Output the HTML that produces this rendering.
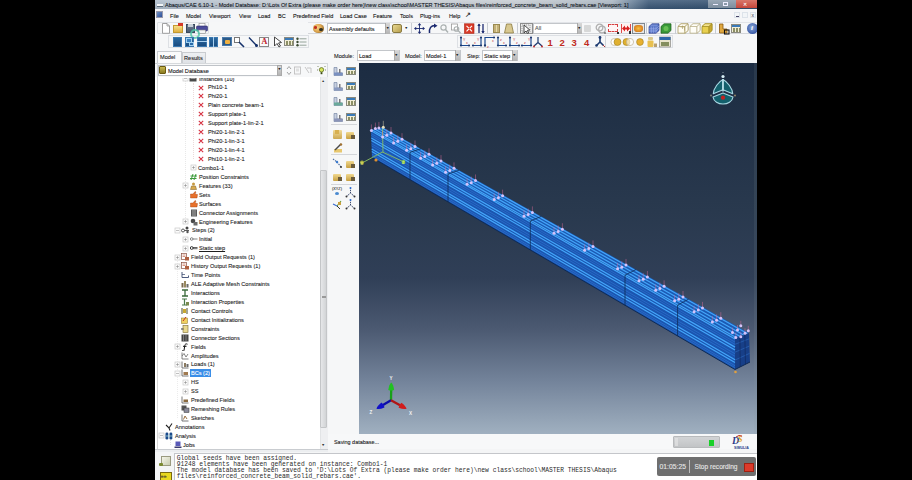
<!DOCTYPE html><html><head><meta charset="utf-8"><style>
*{margin:0;padding:0;box-sizing:border-box}
html,body{width:912px;height:480px;overflow:hidden;background:#000}
body{position:relative;font-family:"Liberation Sans",sans-serif;color:#1e1e1e}
.a{position:absolute}
.t{position:absolute;white-space:nowrap;-webkit-text-stroke:0.1px currentColor}
.m{-webkit-text-stroke:0}
#app{position:absolute;left:155px;top:0;width:602px;height:480px;background:#f4f5f6;overflow:hidden}
</style></head><body>
<div id="app">
<div class="a" style="left:0.00px;top:0.00px;width:602.00px;height:9.00px;background:linear-gradient(180deg,rgba(255,255,255,.15),rgba(0,0,0,.08)),linear-gradient(90deg,#aebccb 0%,#c4cbd3 20%,#c6ccd2 60%,#aab6c2 76%,#6f869e 79%,#3a5777 82%,#2f4d6d 100%)"></div>
<div class="t" style="left:10.20px;top:0.94px;font-size:6.1px;line-height:7.32px;color:#10161e;transform:scaleX(0.906);transform-origin:0 50%;">Abaqus/CAE 6.10-1 - Model Database: D:\Lots Of Extra (please make order here)\new class\school\MASTER THESIS\Abaqus files\reinforced_concrete_beam_solid_rebars.cae [Viewport: 1]</div>
<div class="a" style="left:1.50px;top:4.00px;width:6.00px;height:1.60px;background:#f4f6f8"></div>
<div class="a" style="left:1.50px;top:5.60px;width:6.00px;height:0.80px;background:#5a6a7a"></div>
<div class="a" style="left:553.00px;top:0.00px;width:27.50px;height:8.00px;background:linear-gradient(180deg,#9aa8b6,#7d8d9d)"></div>
<div class="a" style="left:580.50px;top:0.00px;width:21.50px;height:8.00px;background:linear-gradient(180deg,#d9776a,#c4463a)"></div>
<div class="t" style="left:588.00px;top:1.00px;font-size:5px;line-height:6.00px;color:#fff;">✕</div>
<div class="a" style="left:558.00px;top:4.00px;width:5.00px;height:1.20px;background:#eef"></div>
<div class="a" style="left:568.00px;top:2.00px;width:5.00px;height:4.00px;border:1px solid #eef"></div>
<div class="a" style="left:0.00px;top:9.00px;width:602.00px;height:13.00px;background:#f5f6f8"></div>
<div class="a" style="left:1.00px;top:11.00px;width:7.00px;height:7.00px;background:linear-gradient(135deg,#6f8fbf,#2c4f9a);border:1px solid #99a"></div>
<div class="t" style="left:15.10px;top:12.34px;font-size:6.1px;line-height:7.32px;color:#111;transform:scaleX(0.910);transform-origin:0 50%;">File</div>
<div class="t" style="left:30.90px;top:12.34px;font-size:6.1px;line-height:7.32px;color:#111;transform:scaleX(0.910);transform-origin:0 50%;">Model</div>
<div class="t" style="left:54.30px;top:12.34px;font-size:6.1px;line-height:7.32px;color:#111;transform:scaleX(0.910);transform-origin:0 50%;">Viewport</div>
<div class="t" style="left:83.90px;top:12.34px;font-size:6.1px;line-height:7.32px;color:#111;transform:scaleX(0.910);transform-origin:0 50%;">View</div>
<div class="t" style="left:103.30px;top:12.34px;font-size:6.1px;line-height:7.32px;color:#111;transform:scaleX(0.910);transform-origin:0 50%;">Load</div>
<div class="t" style="left:123.00px;top:12.34px;font-size:6.1px;line-height:7.32px;color:#111;transform:scaleX(0.910);transform-origin:0 50%;">BC</div>
<div class="t" style="left:138.00px;top:12.34px;font-size:6.1px;line-height:7.32px;color:#111;transform:scaleX(0.910);transform-origin:0 50%;">Predefined Field</div>
<div class="t" style="left:185.30px;top:12.34px;font-size:6.1px;line-height:7.32px;color:#111;transform:scaleX(0.910);transform-origin:0 50%;">Load Case</div>
<div class="t" style="left:217.90px;top:12.34px;font-size:6.1px;line-height:7.32px;color:#111;transform:scaleX(0.910);transform-origin:0 50%;">Feature</div>
<div class="t" style="left:244.50px;top:12.34px;font-size:6.1px;line-height:7.32px;color:#111;transform:scaleX(0.910);transform-origin:0 50%;">Tools</div>
<div class="t" style="left:265.30px;top:12.34px;font-size:6.1px;line-height:7.32px;color:#111;transform:scaleX(0.910);transform-origin:0 50%;">Plug-ins</div>
<div class="t" style="left:293.90px;top:12.34px;font-size:6.1px;line-height:7.32px;color:#111;transform:scaleX(0.910);transform-origin:0 50%;">Help</div>
<div class="t" style="left:310px;top:11px;font-size:7px;line-height:8px;color:#222">&#8599;</div>
<div class="a" style="left:579.00px;top:12.00px;width:6.00px;height:6.00px;border:1px solid #dde3ea;background:#f2f5f8"></div>
<div class="a" style="left:587.00px;top:12.00px;width:6.00px;height:6.00px;border:1px solid #dde3ea;background:#f2f5f8"></div>
<div class="a" style="left:595.00px;top:12.00px;width:6.00px;height:6.00px;border:1px solid #dde3ea;background:#f2f5f8"></div>
<div class="a" style="left:580.50px;top:16.00px;width:3.00px;height:1.00px;background:#446"></div>
<div class="t" style="left:596.50px;top:12.00px;font-size:5px;line-height:6.00px;color:#556;">x</div>
<div class="a" style="left:0.00px;top:22.00px;width:602.00px;height:27.00px;background:#f6f7f8"></div>
<div class="a" style="left:2.00px;top:21.50px;width:52.00px;height:12.50px;border:1px solid #dde0e4;border-radius:1px"></div>
<div class="a" style="left:13.00px;top:35.00px;width:141.00px;height:12.50px;border:1px solid #dde0e4"></div>
<div class="a" style="left:153.00px;top:22.00px;width:449.00px;height:12.00px;border-top:1px solid #e2e4e8;border-bottom:1px solid #d4d6da"></div>
<div class="a" style="left:302.00px;top:35.00px;width:216.00px;height:12.50px;border:1px solid #dde0e4"></div>
<svg class="a" style="left:6px;top:23px" width="10" height="11"><path d="M1.5 0.5 L6 0.5 L8.5 3 L8.5 10.3 L1.5 10.3 Z" fill="#fff" stroke="#8a8a8a" stroke-width="0.8"/><path d="M6 0.5 L6 3 L8.5 3" fill="none" stroke="#8a8a8a" stroke-width="0.7"/></svg>
<div class="a" style="left:18.00px;top:25.00px;width:10.00px;height:7.50px;background:linear-gradient(#f6df8a,#e0b040);border:1px solid #c49a30"></div>
<div class="a" style="left:23.00px;top:23.00px;width:5.00px;height:3.00px;background:#d43a2a"></div>
<div class="a" style="left:30.50px;top:23.50px;width:9.00px;height:9.00px;background:linear-gradient(#6a7a90,#4a5a70);border:0.8px solid #3a4a5e"></div>
<div class="a" style="left:32.50px;top:24.00px;width:5.00px;height:3.00px;background:#c8d0d8"></div>
<svg class="a" style="left:41px;top:23px" width="12" height="11"><rect x="3" y="0.5" width="6" height="3" fill="#fff" stroke="#888" stroke-width="0.6"/><rect x="0.5" y="3" width="11" height="5" rx="1" fill="#4a4a9a" stroke="#2a2a6a" stroke-width="0.6"/><rect x="2.5" y="7" width="7" height="3.5" fill="#f4f4f4" stroke="#888" stroke-width="0.6"/></svg>
<div class="a" style="left:35px;top:29px;width:10px;height:10px;border:2px solid #4fc8a8;border-radius:50%;opacity:.8"></div>
<div class="a" style="left:18.00px;top:37.00px;width:9.00px;height:9.50px;background:linear-gradient(#2a68a0,#1a4c80);border:0.8px solid #3a78b0"></div>
<div class="a" style="left:30.00px;top:37.00px;width:9.00px;height:9.50px;background:linear-gradient(#2a68a0,#1a4c80);border:0.8px solid #3a78b0"></div>
<div class="a" style="left:42.00px;top:37.00px;width:10.00px;height:9.50px;background:linear-gradient(#2a68a0,#1a4c80);border:0.8px solid #3a78b0"></div>
<div class="a" style="left:54.00px;top:37.00px;width:9.00px;height:9.50px;background:linear-gradient(#2a68a0,#1a4c80);border:0.8px solid #3a78b0"></div>
<div class="a" style="left:31.00px;top:38.00px;width:6.00px;height:4.50px;background:#3a80c0;border:0.6px solid #a0d0f0"></div>
<div class="a" style="left:34.00px;top:41.50px;width:5.00px;height:4.50px;background:#2a6aa8;border:0.6px solid #a0d0f0"></div>
<div class="a" style="left:42.00px;top:41.30px;width:10.00px;height:0.70px;background:#a8d0f0"></div>
<div class="a" style="left:58.20px;top:37.00px;width:0.70px;height:9.50px;background:#a8d0f0"></div>
<div class="a" style="left:67.00px;top:37.00px;width:10.00px;height:9.00px;background:#2a5a8a;border:1px solid #4a7aaa"></div>
<div class="a" style="left:69.50px;top:39.50px;width:5.00px;height:4.00px;background:#f0b040;border-radius:1px"></div>
<div class="a" style="left:79.00px;top:37.00px;width:6.00px;height:6.00px;border:1px solid #777;background:#fff"></div>
<svg class="a" style="left:79px;top:36px" width="26" height="12"><line x1="5" y1="6" x2="10" y2="11" stroke="#14306a" stroke-width="1.6"/><line x1="15" y1="1.5" x2="23" y2="10" stroke="#14306a" stroke-width="1.3"/><circle cx="22.5" cy="9.5" r="1.5" fill="#14306a"/></svg>
<div class="a" style="left:104.00px;top:36.50px;width:10.00px;height:10.00px;border:1px solid #888;background:#fafafa"></div>
<div class="t" style="left:106.50px;top:36.80px;font-size:8px;line-height:9.60px;color:#c0202a;font-family:'Liberation Serif',serif;font-weight:bold">A</div>
<svg class="a" style="left:118px;top:36px" width="10" height="12"><path d="M1.5 1 L1.5 10 L4 7.5 L6 11 L7.5 10 L5.5 7 L8.5 6.5 Z" fill="#fff" stroke="#333" stroke-width="0.9"/></svg>
<div class="a" style="left:129.00px;top:37.00px;width:10.00px;height:9.00px;background:linear-gradient(#3a7ab8 0,#3a7ab8 30%,#f2eed8 30%);border:0.8px solid #8a8a80"></div>
<div class="a" style="left:130.50px;top:41.00px;width:7.00px;height:4.00px;background:repeating-linear-gradient(90deg,#6a7040 0 2px,#f2eed8 2px 3px);opacity:.75"></div>
<svg class="a" style="left:141px;top:37px" width="11" height="10"><g fill="#3a4a30"><circle cx="1.5" cy="1.8" r="1.2"/><circle cx="1.5" cy="5" r="1.2"/><circle cx="1.5" cy="8.2" r="1.2"/></g><g stroke="#8a9a90" stroke-width="0.9"><line x1="3.5" y1="1.8" x2="10.5" y2="1.8"/><line x1="3.5" y1="5" x2="10.5" y2="5"/><line x1="3.5" y1="8.2" x2="10.5" y2="8.2"/></g></svg>
<div class="a" style="left:158.00px;top:24.00px;width:11.00px;height:9.00px;background:radial-gradient(circle at 40% 40%,#f4d28a 0,#e0a850 45%,#6a4a20 100%);border-radius:45%"></div>
<div class="a" style="left:158.50px;top:26.00px;width:3.50px;height:2.50px;background:#c03020;border-radius:50%"></div>
<div class="a" style="left:164.00px;top:28.00px;width:3.50px;height:3.00px;background:#303020;border-radius:50%"></div>
<div class="a" style="left:172.00px;top:23.00px;width:63.00px;height:11.00px;background:#fff;border:1px solid #bfc3c8"></div>
<div class="a" style="left:230.00px;top:23.00px;width:5.00px;height:11.00px;background:linear-gradient(#d8d8d8,#b4b4b4);border-left:1px solid #aaa"></div>
<div class="t" style="left:231.00px;top:26.40px;font-size:3.5px;line-height:4.20px;color:#222;">&#9660;</div>
<div class="t" style="left:174.00px;top:24.84px;font-size:6.1px;line-height:7.32px;color:#151515;transform:scaleX(0.920);transform-origin:0 50%;">Assembly defaults</div>
<div class="a" style="left:237.00px;top:23.50px;width:10.00px;height:9.50px;background:linear-gradient(135deg,#e8d890,#b8a050);border:1px solid #8a7a40;border-radius:2px"></div>
<div class="t" style="left:249.50px;top:26.40px;font-size:3.5px;line-height:4.20px;color:#222;">&#9660;</div>
<div class="a" style="left:256.00px;top:23.00px;width:0.80px;height:11.00px;background:#c8ccd2"></div>
<svg class="a" style="left:259px;top:23px" width="80" height="11"><g stroke="#1c2a70" stroke-width="0.9"><line x1="5.5" y1="1.5" x2="5.5" y2="9.5"/><line x1="1.5" y1="5.5" x2="9.5" y2="5.5"/></g><path d="M5.5 0 L7.3 2.2 L3.7 2.2Z M5.5 11 L7.3 8.8 L3.7 8.8Z M0 5.5 L2.2 3.7 L2.2 7.3Z M11 5.5 L8.8 3.7 L8.8 7.3Z" fill="#1c2a70"/><path d="M15.5 10 C15 5 17 2.5 21 2.5" stroke="#1c2a70" stroke-width="1.5" fill="none"/><path d="M20 0.5 L23.5 2.8 L20 5 Z" fill="#1c2a70"/><circle cx="29.5" cy="4.5" r="2.6" fill="none" stroke="#aab0b0" stroke-width="1.2"/><line x1="31.5" y1="6.5" x2="34" y2="9.5" stroke="#aab0b0" stroke-width="1.4"/><rect x="37.5" y="1" width="6" height="6" fill="#fff" stroke="#999" stroke-width="0.8"/><circle cx="42.5" cy="6" r="2.3" fill="none" stroke="#aab0b0" stroke-width="1.1"/><line x1="44" y1="7.5" x2="46.5" y2="10" stroke="#aab0b0" stroke-width="1.3"/><rect x="50.5" y="0.8" width="9.5" height="9.5" fill="#d83a28" stroke="#b02010" stroke-width="0.6"/><path d="M52.5 2.8 L54.8 5.1 M58 2.8 L55.7 5.1 M52.5 8.3 L54.8 6 M58 8.3 L55.7 6" stroke="#fff" stroke-width="1.1"/><g stroke="#1c2a70" stroke-width="1.3"><line x1="65" y1="1" x2="65" y2="10"/><line x1="69" y1="1" x2="69" y2="10"/></g><path d="M63.3 3 L65 0.5 L66.7 3Z M67.3 8 L69 10.5 L70.7 8Z" fill="#1c2a70"/></svg>
<div class="a" style="left:332.00px;top:23.00px;width:0.80px;height:11.00px;background:#c8ccd2"></div>
<div class="a" style="left:338.00px;top:24.00px;width:7.00px;height:9.00px;background:repeating-linear-gradient(90deg,#c4b078 0 2px,#e6dca8 2px 3px);border:1px solid #9a8a50"></div>
<svg class="a" style="left:349px;top:23px" width="10" height="11"><path d="M2.5 1 L7.5 1 L9.5 10 L0.5 10 Z" fill="#d8c890" stroke="#8a7a40" stroke-width="0.8"/></svg>
<div class="a" style="left:362.00px;top:23.00px;width:0.80px;height:11.00px;background:#c8ccd2"></div>
<div class="a" style="left:365.00px;top:23.00px;width:12.50px;height:10.50px;background:#e9e9e9;border:1px solid #8d8d8d"></div>
<svg class="a" style="left:366px;top:24px" width="11" height="10"><path d="M3 1 L3 9 L5 7 L6.5 9.5 L7.7 8.8 L6.3 6.4 L8.8 6 Z" fill="#fff" stroke="#333" stroke-width="0.9"/><rect x="1" y="1" width="8" height="7" fill="none" stroke="#555" stroke-width="0.5" stroke-dasharray="1 1"/></svg>
<div class="a" style="left:378.00px;top:23.00px;width:48.50px;height:10.50px;background:#fff;border:1px solid #c3c6ca"></div>
<div class="a" style="left:422.00px;top:23.00px;width:4.50px;height:10.50px;background:linear-gradient(#d8d8d8,#b4b4b4);border-left:1px solid #aaa"></div>
<div class="t" style="left:422.50px;top:26.10px;font-size:3.5px;line-height:4.20px;color:#222;">&#9660;</div>
<div class="t" style="left:380.00px;top:25.20px;font-size:5.5px;line-height:6.60px;color:#555;">All</div>
<div class="a" style="left:429.00px;top:25.00px;width:7.00px;height:7.00px;background:#cfcfcf;border-radius:1px;opacity:.8"></div>
<svg class="a" style="left:440px;top:23px" width="12" height="11"><circle cx="4.5" cy="4.5" r="3.3" fill="none" stroke="#b0b0b0" stroke-width="1.3"/><circle cx="7" cy="6.5" r="3.3" fill="none" stroke="#b0b0b0" stroke-width="1.3"/><line x1="9" y1="10" x2="11" y2="10" stroke="#444" stroke-width="1"/></svg>
<div class="a" style="left:453.00px;top:23.50px;width:10.00px;height:8.50px;border:1px dashed #d84040;background:#fff6f6"></div>
<div class="a" style="left:462.00px;top:31.50px;width:2.00px;height:2.00px;background:#333"></div>
<div class="a" style="left:466.00px;top:24.00px;width:9.00px;height:8.00px;background:#fff0ee"></div>
<svg class="a" style="left:465px;top:23px" width="12" height="11"><path d="M1.5 1 L1.5 10 M10.5 1 L10.5 10" stroke="#d82020" stroke-width="0.8"/><path d="M2 5.5 L5 2.5 L5 8.5 Z M10 5.5 L7 2.5 L7 8.5 Z" fill="#d82020"/><rect x="4.5" y="4.5" width="3" height="2" fill="#d82020"/></svg>
<div class="a" style="left:474.00px;top:31.00px;width:1.50px;height:2.50px;background:#333"></div>
<div class="a" style="left:477.00px;top:23.00px;width:12.50px;height:10.50px;background:#e6e6e6;border:1px solid #808890"></div>
<div class="a" style="left:479.00px;top:25.00px;width:9.00px;height:7.00px;background:radial-gradient(ellipse at 50% 50%,#f8c040,#d88020 70%,#a06020);border-radius:40%"></div>
<div class="a" style="left:490.50px;top:23.00px;width:0.70px;height:11.00px;background:#c8ccd2"></div>
<svg class="a" style="left:493px;top:23px" width="12" height="11"><path d="M1 3.5 L4 0.8 L11 0.8 L11 7.5 L8 10.2 L1 10.2 Z" fill="#5a78c8" stroke="#2a3a8a" stroke-width="0.7"/><path d="M1 5.8 L8 5.8 L11 3 M1 8 L8 8 L11 5.2 M3.3 3.5 L3.3 10.2 M5.6 3.5 L5.6 10.2 M8 3.5 L8 10.2 M2.5 2.2 L9.5 2.2" stroke="#a8b8f0" stroke-width="0.5" fill="none"/></svg>
<svg class="a" style="left:505px;top:23px" width="12" height="11"><path d="M1 3.5 L4 0.8 L11 0.8 L11 7.5 L8 10.2 L1 10.2 Z" fill="#3a9a3a" stroke="#1a5a1a" stroke-width="0.7"/><circle cx="6" cy="5.5" r="2.5" fill="#7ad060" opacity=".7"/></svg>
<div class="a" style="left:519.50px;top:23.00px;width:0.70px;height:11.00px;background:#c8ccd2"></div>
<svg class="a" style="left:522px;top:23px" width="12" height="11"><path d="M1 3.5 L4 0.8 L11 0.8 L11 7.5 L8 10.2 L1 10.2 Z" fill="#fffdf4" stroke="#a89a60" stroke-width="0.8"/><path d="M1 3.5 L8 3.5 L11 0.8 M8 3.5 L8 10.2" fill="none" stroke="#a89a60" stroke-width="0.8"/><path d="M1 3.5 L4 0.8 L11 0.8 L8 3.5 Z" fill="#fffdf4" stroke="#a89a60" stroke-width="0.6400000000000001"/><path d="M8 3.5 L11 0.8 L11 7.5 L8 10.2 Z" fill="#fffdf4" stroke="#a89a60" stroke-width="0.6400000000000001"/></svg>
<svg class="a" style="left:525px;top:25px" width="6" height="6"><path d="M0.5 2 L4.5 2 L4.5 5.5 M2.5 0.5 L2.5 4" stroke="#a89a60" stroke-width="0.6" fill="none"/></svg>
<svg class="a" style="left:534px;top:23px" width="12" height="11"><path d="M1 3.5 L4 0.8 L11 0.8 L11 7.5 L8 10.2 L1 10.2 Z" fill="#fffef8" stroke="#b8ae88" stroke-width="0.8"/><path d="M1 3.5 L8 3.5 L11 0.8 M8 3.5 L8 10.2" fill="none" stroke="#b8ae88" stroke-width="0.8"/><path d="M1 3.5 L4 0.8 L11 0.8 L8 3.5 Z" fill="#fffef8" stroke="#b8ae88" stroke-width="0.6400000000000001"/><path d="M8 3.5 L11 0.8 L11 7.5 L8 10.2 Z" fill="#fffef8" stroke="#b8ae88" stroke-width="0.6400000000000001"/></svg>
<svg class="a" style="left:546px;top:23px" width="12" height="11"><path d="M1 3.5 L4 0.8 L11 0.8 L11 7.5 L8 10.2 L1 10.2 Z" fill="#e8d050" stroke="#a08a20" stroke-width="0.8"/><path d="M1 3.5 L8 3.5 L11 0.8 M8 3.5 L8 10.2" fill="none" stroke="#a08a20" stroke-width="0.8"/><path d="M1 3.5 L4 0.8 L11 0.8 L8 3.5 Z" fill="#f4e490" stroke="#a08a20" stroke-width="0.6400000000000001"/><path d="M8 3.5 L11 0.8 L11 7.5 L8 10.2 Z" fill="#c8a830" stroke="#a08a20" stroke-width="0.6400000000000001"/></svg>
<div class="a" style="left:560.00px;top:23.00px;width:0.80px;height:11.00px;background:#c8ccd2"></div>
<svg class="a" style="left:563px;top:23px" width="12" height="12"><path d="M1.5 1 L5 1 L5 6 L9 6 L9 10 L1.5 10 Z" fill="#e0a840" stroke="#8a5a10" stroke-width="0.8"/><rect x="6.5" y="7" width="4.5" height="4" fill="none" stroke="#111" stroke-width="1.1"/></svg>
<div class="a" style="left:576.00px;top:24.00px;width:10.00px;height:9.00px;background:linear-gradient(#3a7ab8 0,#3a7ab8 30%,#f2eed8 30%);border:0.8px solid #8a8a80"></div>
<div class="a" style="left:577.50px;top:28.00px;width:7.00px;height:4.00px;background:repeating-linear-gradient(90deg,#6a7040 0 2px,#f2eed8 2px 3px);opacity:.75"></div>
<div class="a" style="left:592.00px;top:23.00px;width:11.00px;height:11.00px;background:radial-gradient(circle at 45% 40%,#8aa8d8,#3a5aa8 70%);border-radius:50%"></div>
<div class="t" style="left:596.00px;top:24.30px;font-size:7px;line-height:8.40px;color:#fff;font-family:'Liberation Serif',serif;font-style:italic;font-weight:bold">i</div>
<svg class="a" style="left:304px;top:36px" width="215" height="12"><path d="M2 1.5 L2 9.5 L10 9.5" fill="none" stroke="#1c4a90" stroke-width="1.2"/><path d="M22 1.5 L22 9.5 L14 9.5" fill="none" stroke="#1c4a90" stroke-width="1.2"/><path d="M26 9.5 L26 1.5 L35 1.5" fill="none" stroke="#1c4a90" stroke-width="1.2"/><path d="M39 1.5 L39 9.5 L47 9.5" fill="none" stroke="#1c4a90" stroke-width="1.2"/><path d="M51 1.5 L51 9.5 L60 9.5" fill="none" stroke="#1c4a90" stroke-width="1.2"/><path d="M72 1.5 L72 9.5 L63 9.5" fill="none" stroke="#1c4a90" stroke-width="1.2"/><circle cx="2" cy="9.5" r="1.1" fill="#1c3a70"/><circle cx="10" cy="9.5" r="1.1" fill="#1c3a70"/><circle cx="22" cy="9.5" r="1.1" fill="#1c3a70"/><circle cx="14" cy="9.5" r="1.1" fill="#1c3a70"/><circle cx="26" cy="9.5" r="1.1" fill="#1c3a70"/><circle cx="35" cy="1.5" r="1.1" fill="#1c3a70"/><circle cx="39" cy="9.5" r="1.1" fill="#1c3a70"/><circle cx="47" cy="9.5" r="1.1" fill="#1c3a70"/><circle cx="51" cy="9.5" r="1.1" fill="#1c3a70"/><circle cx="60" cy="9.5" r="1.1" fill="#1c3a70"/><circle cx="72" cy="9.5" r="1.1" fill="#1c3a70"/><circle cx="63" cy="9.5" r="1.1" fill="#1c3a70"/><circle cx="2" cy="1.5" r="1.1" fill="#1c3a70"/><circle cx="22" cy="1.5" r="1.1" fill="#1c3a70"/><circle cx="26" cy="9.5" r="1.1" fill="#1c3a70"/><circle cx="39" cy="1.5" r="1.1" fill="#1c3a70"/><circle cx="51" cy="1.5" r="1.1" fill="#1c3a70"/><circle cx="72" cy="1.5" r="1.1" fill="#1c3a70"/><text x="4" y="4.5" font-size="3.5" fill="#c03030" font-family="Liberation Sans">Y</text><text x="7" y="8" font-size="3.5" fill="#c03030" font-family="Liberation Sans">x</text><text x="15" y="8" font-size="3.5" fill="#c03030" font-family="Liberation Sans">x</text><text x="18" y="4.5" font-size="3.5" fill="#c03030" font-family="Liberation Sans">Y</text><text x="28" y="11.5" font-size="3.5" fill="#c03030" font-family="Liberation Sans">z</text><text x="33" y="6" font-size="3.5" fill="#c03030" font-family="Liberation Sans">x</text><text x="41" y="4.5" font-size="3.5" fill="#c03030" font-family="Liberation Sans">z</text><text x="44" y="8" font-size="3.5" fill="#c03030" font-family="Liberation Sans">x</text><text x="54" y="4.5" font-size="3.5" fill="#c03030" font-family="Liberation Sans">Y</text><text x="57" y="8" font-size="3.5" fill="#c03030" font-family="Liberation Sans">z</text><text x="65" y="8" font-size="3.5" fill="#c03030" font-family="Liberation Sans">z</text><text x="69" y="4.5" font-size="3.5" fill="#c03030" font-family="Liberation Sans">Y</text><g stroke="#1c3a70" stroke-width="1.2"><line x1="79" y1="6.5" x2="79" y2="1"/><line x1="79" y1="6.5" x2="75" y2="10"/><line x1="79" y1="6.5" x2="83" y2="10"/></g><circle cx="75" cy="10.5" r="1" fill="#c03030"/><circle cx="83" cy="10.5" r="1" fill="#c03030"/><text x="88.5" y="10.2" font-size="9.5" fill="#c02a20" font-weight="bold" font-family="Liberation Sans">1</text><text x="100.5" y="10.2" font-size="9.5" fill="#c02a20" font-weight="bold" font-family="Liberation Sans">2</text><text x="112.5" y="10.2" font-size="9.5" fill="#c02a20" font-weight="bold" font-family="Liberation Sans">3</text><text x="125" y="10.2" font-size="9.5" fill="#c02a20" font-weight="bold" font-family="Liberation Sans">4</text><g stroke="#1c3a70" stroke-width="1.6"><line x1="141" y1="6" x2="141" y2="1"/><line x1="141" y1="6" x2="137.5" y2="9.5"/><line x1="141" y1="6" x2="144.5" y2="9.5"/></g><circle cx="141" cy="1.5" r="1.4" fill="#1c3a70"/><circle cx="137.5" cy="9.5" r="1.3" fill="#1c3a70"/><line x1="144" y1="9" x2="146" y2="11" stroke="#aa3030" stroke-width="1"/><line x1="146.5" y1="0" x2="146.5" y2="12" stroke="#c8ccd2" stroke-width="0.8"/><circle cx="155.5" cy="6" r="3.6" fill="#fff" stroke="#c0b090" stroke-width="0.7"/><circle cx="158.5" cy="6" r="3.5" fill="#e0b030" stroke="#a08020" stroke-width="0.6"/><circle cx="167.5" cy="6" r="3.5" fill="#e0b030" stroke="#a08020" stroke-width="0.6"/><circle cx="171" cy="6" r="3.6" fill="#fff" fill-opacity="0.6" stroke="#c0b090" stroke-width="0.7"/><circle cx="181" cy="6" r="3.4" fill="#e8b030" stroke="#a08020" stroke-width="0.6"/><rect x="189" y="1" width="5" height="3" fill="#d8c890" rx="1"/><rect x="188.5" y="4.5" width="6" height="6.5" fill="#e8c050" rx="1"/><rect x="195" y="7.5" width="3" height="3.5" fill="#b8a070"/><rect x="200.5" y="1" width="11" height="10" fill="#e8e4cc" stroke="#777" stroke-width="0.6"/><rect x="200.5" y="1" width="11" height="3" fill="#2c66a8"/><rect x="202" y="6" width="8" height="4" fill="#5a6a30" opacity="0.7"/></svg>
<div class="a" style="left:173.00px;top:48.00px;width:429.00px;height:15.00px;background:#f6f7f8"></div>
<div class="t" style="left:178.80px;top:51.64px;font-size:6.1px;line-height:7.32px;color:#1a1a1a;transform:scaleX(0.920);transform-origin:0 50%;">Module:</div>
<div class="a" style="left:202.00px;top:49.50px;width:43.00px;height:11.50px;background:#fff;border:1px solid #c3c6ca"></div>
<div class="a" style="left:239.00px;top:49.50px;width:6.00px;height:11.50px;background:linear-gradient(#d8d8d8,#b4b4b4);border-left:1px solid #aaa;border-right:1px solid #c3c6ca"></div>
<div class="t" style="left:239.50px;top:52.90px;font-size:3.5px;line-height:4.20px;color:#222;">&#9660;</div>
<div class="t" style="left:204.00px;top:51.64px;font-size:6.1px;line-height:7.32px;color:#151515;transform:scaleX(0.920);transform-origin:0 50%;">Load</div>
<div class="a" style="left:269.00px;top:49.50px;width:37.00px;height:11.50px;background:#fff;border:1px solid #c3c6ca"></div>
<div class="a" style="left:300.00px;top:49.50px;width:6.00px;height:11.50px;background:linear-gradient(#d8d8d8,#b4b4b4);border-left:1px solid #aaa;border-right:1px solid #c3c6ca"></div>
<div class="t" style="left:300.50px;top:52.90px;font-size:3.5px;line-height:4.20px;color:#222;">&#9660;</div>
<div class="t" style="left:271.00px;top:51.64px;font-size:6.1px;line-height:7.32px;color:#151515;transform:scaleX(0.920);transform-origin:0 50%;">Model-1</div>
<div class="a" style="left:327.00px;top:49.50px;width:36.00px;height:11.50px;background:#fff;border:1px solid #c3c6ca"></div>
<div class="a" style="left:357.00px;top:49.50px;width:6.00px;height:11.50px;background:linear-gradient(#d8d8d8,#b4b4b4);border-left:1px solid #aaa;border-right:1px solid #c3c6ca"></div>
<div class="t" style="left:357.50px;top:52.90px;font-size:3.5px;line-height:4.20px;color:#222;">&#9660;</div>
<div class="t" style="left:329.00px;top:51.64px;font-size:6.1px;line-height:7.32px;color:#151515;transform:scaleX(0.920);transform-origin:0 50%;">Static step</div>
<div class="t" style="left:250.00px;top:51.64px;font-size:6.1px;line-height:7.32px;color:#1a1a1a;transform:scaleX(0.920);transform-origin:0 50%;">Model:</div>
<div class="t" style="left:312.00px;top:51.64px;font-size:6.1px;line-height:7.32px;color:#1a1a1a;transform:scaleX(0.920);transform-origin:0 50%;">Step:</div>
<div class="a" style="left:0.00px;top:49.00px;width:175.00px;height:14.00px;background:#f6f7f8"></div>
<div class="a" style="left:2.00px;top:50.50px;width:24.50px;height:13.00px;background:#fbfbfb;border:1px solid #c9ccd0;border-bottom:none"></div>
<div class="a" style="left:26.50px;top:52.00px;width:24.50px;height:10.50px;background:linear-gradient(#eef0f2,#dfe2e6);border:1px solid #c9ccd0;border-bottom:none"></div>
<div class="t" style="left:4.50px;top:53.34px;font-size:6.1px;line-height:7.32px;color:#222;transform:scaleX(0.920);transform-origin:0 50%;">Model</div>
<div class="t" style="left:28.80px;top:53.94px;font-size:6.1px;line-height:7.32px;color:#222;transform:scaleX(0.920);transform-origin:0 50%;">Results</div>
<div class="a" style="left:0.00px;top:62.50px;width:173.00px;height:1.00px;background:#c9ccd0"></div>
<div class="a" style="left:26.50px;top:62.50px;width:0.00px;height:1.00px;"></div>
<div class="a" style="left:2.00px;top:62.50px;width:24.50px;height:1.00px;background:#fbfbfb"></div>
<div class="a" style="left:0.00px;top:63.50px;width:173.00px;height:14.00px;background:#f7f8f9"></div>
<div class="a" style="left:1.50px;top:63.00px;width:171.50px;height:14.50px;border:1px solid #d6d9dc;border-bottom:none"></div>
<div class="a" style="left:2.50px;top:64.50px;width:124.50px;height:11.50px;background:#fff;border:1px solid #bfc3c8"></div>
<div class="a" style="left:122.00px;top:64.50px;width:5.00px;height:11.50px;background:linear-gradient(#d8d8d8,#b4b4b4);border:1px solid #aaa"></div>
<div class="t" style="left:122.70px;top:68.02px;font-size:3.3px;line-height:3.96px;color:#222;">&#9660;</div>
<div class="a" style="left:4.00px;top:66.00px;width:7.00px;height:8.00px;background:linear-gradient(#c8b850,#8a7a20);border:1px solid #6a5a10;border-radius:1px"></div>
<div class="t" style="left:13.40px;top:66.64px;font-size:6.1px;line-height:7.32px;color:#151515;transform:scaleX(0.920);transform-origin:0 50%;">Model Database</div>
<svg class="a" style="left:129px;top:64px" width="44" height="13"><path d="M3 5 L5 2.5 L7 5" fill="none" stroke="#999" stroke-width="0.9"/><path d="M3 8 L5 10.5 L7 8" fill="none" stroke="#999" stroke-width="0.9"/><rect x="10.5" y="3" width="6" height="7" fill="none" stroke="#c0c0c0" stroke-width="0.9"/><rect x="12" y="4.5" width="3" height="3" fill="#e0e0e0"/><path d="M21 3 L25 9 M23 4 L27 4 L27 9" fill="none" stroke="#c0c0c0" stroke-width="0.9"/><circle cx="37.5" cy="5.8" r="2.2" fill="#d8e860" stroke="#4a5a10" stroke-width="0.7"/><rect x="36.6" y="8.2" width="1.8" height="2" fill="#3a4a10"/><path d="M33.5 2 L34.5 3 M41.5 2 L40.5 3 M33 6 L34 6 M41 6 L42 6" stroke="#3a4a10" stroke-width="0.6"/></svg>
<div class="a" style="left:0.00px;top:77.00px;width:164.50px;height:372.00px;background:#fff"></div>
<div class="a" style="left:1.50px;top:77.00px;width:1.80px;height:372.00px;background:#d6d6d6"></div>
<div class="a" style="left:164.50px;top:77.00px;width:8.00px;height:372.00px;background:#eeeff1;border-left:1px solid #e2e4e6"></div>
<div class="a" style="left:165.00px;top:170.00px;width:7.30px;height:257.50px;background:linear-gradient(90deg,#e6e7e9,#d2d4d6);border:1px solid #c4c6c8;border-radius:1px"></div>
<div class="t" style="left:166.50px;top:79.72px;font-size:3.3px;line-height:3.96px;color:#333;">&#9650;</div>
<div class="t" style="left:166.50px;top:444.02px;font-size:3.3px;line-height:3.96px;color:#333;">&#9660;</div>
<div class="a" style="left:166.50px;top:295.50px;width:4.00px;height:0.80px;background:#999"></div>
<div class="a" style="left:166.50px;top:297.20px;width:4.00px;height:0.80px;background:#999"></div>
<div class="a" style="left:0.00px;top:448.50px;width:173.00px;height:3.50px;background:#eceef0;border-top:1px solid #c9ccd0"></div>
<div class="a" style="left:0;top:78.2px;width:164.5px;height:370.3px;overflow:hidden">
<div class="a" style="left:21.50px;top:179.10px;width:0;height:160.83px;border-left:0.8px dotted #ececec"></div>
<div class="a" style="left:30.30px;top:-1.20px;width:0;height:144.56px;border-left:0.8px dotted #e8e8e8"></div>
<div class="a" style="left:38.30px;top:4.40px;width:0;height:76.41px;border-left:0.8px dotted #eadada"></div>
<div class="a" style="left:14.50px;top:357.80px;width:0;height:8.94px;border-left:0.8px dotted #e2e2e2"></div>
<svg class="a" style="left:26.00px;top:-4.10px" width="9" height="9"><rect x="2" y="2" width="5" height="5" fill="#fcfcfc" stroke="#c8c8c8" stroke-width="0.7"/><path d="M2 4.5 L7 4.5" stroke="#6a6a6a" stroke-width="0.7" transform="translate(4.5 4.5) scale(0.6) translate(-4.5 -4.5)"/></svg>
<svg class="a" style="left:34.30px;top:-3.60px" width="8.5" height="8"><rect x="0.5" y="1.5" width="7" height="5" fill="#4a4a4a"/><rect x="1.5" y="2.5" width="5" height="1.5" fill="#9a9a9a"/></svg>
<div class="t" style="left:44.00px;top:-3.62px;font-size:6.2px;line-height:7.44px;color:#1e1e1e;transform:scaleX(0.903);transform-origin:0 50%;">Instances (10)</div>
<svg class="a" style="left:42.50px;top:6.33px" width="6" height="6"><path d="M0.8 0.8 L5.2 5.2 M5.2 0.8 L0.8 5.2" stroke="#d63040" stroke-width="1.05"/></svg>
<div class="t" style="left:52.50px;top:5.31px;font-size:6.2px;line-height:7.44px;color:#1e1e1e;transform:scaleX(0.903);transform-origin:0 50%;">Phi10-1</div>
<svg class="a" style="left:42.50px;top:15.27px" width="6" height="6"><path d="M0.8 0.8 L5.2 5.2 M5.2 0.8 L0.8 5.2" stroke="#d63040" stroke-width="1.05"/></svg>
<div class="t" style="left:52.50px;top:14.25px;font-size:6.2px;line-height:7.44px;color:#1e1e1e;transform:scaleX(0.903);transform-origin:0 50%;">Phi20-1</div>
<svg class="a" style="left:42.50px;top:24.20px" width="6" height="6"><path d="M0.8 0.8 L5.2 5.2 M5.2 0.8 L0.8 5.2" stroke="#d63040" stroke-width="1.05"/></svg>
<div class="t" style="left:52.50px;top:23.19px;font-size:6.2px;line-height:7.44px;color:#1e1e1e;transform:scaleX(0.903);transform-origin:0 50%;">Plain concrete beam-1</div>
<svg class="a" style="left:42.50px;top:33.14px" width="6" height="6"><path d="M0.8 0.8 L5.2 5.2 M5.2 0.8 L0.8 5.2" stroke="#d63040" stroke-width="1.05"/></svg>
<div class="t" style="left:52.50px;top:32.12px;font-size:6.2px;line-height:7.44px;color:#1e1e1e;transform:scaleX(0.903);transform-origin:0 50%;">Support plate-1</div>
<svg class="a" style="left:42.50px;top:42.08px" width="6" height="6"><path d="M0.8 0.8 L5.2 5.2 M5.2 0.8 L0.8 5.2" stroke="#d63040" stroke-width="1.05"/></svg>
<div class="t" style="left:52.50px;top:41.06px;font-size:6.2px;line-height:7.44px;color:#1e1e1e;transform:scaleX(0.903);transform-origin:0 50%;">Support plate-1-lin-2-1</div>
<svg class="a" style="left:42.50px;top:51.01px" width="6" height="6"><path d="M0.8 0.8 L5.2 5.2 M5.2 0.8 L0.8 5.2" stroke="#d63040" stroke-width="1.05"/></svg>
<div class="t" style="left:52.50px;top:49.99px;font-size:6.2px;line-height:7.44px;color:#1e1e1e;transform:scaleX(0.903);transform-origin:0 50%;">Phi20-1-lin-2-1</div>
<svg class="a" style="left:42.50px;top:59.94px" width="6" height="6"><path d="M0.8 0.8 L5.2 5.2 M5.2 0.8 L0.8 5.2" stroke="#d63040" stroke-width="1.05"/></svg>
<div class="t" style="left:52.50px;top:58.92px;font-size:6.2px;line-height:7.44px;color:#1e1e1e;transform:scaleX(0.903);transform-origin:0 50%;">Phi20-1-lin-3-1</div>
<svg class="a" style="left:42.50px;top:68.88px" width="6" height="6"><path d="M0.8 0.8 L5.2 5.2 M5.2 0.8 L0.8 5.2" stroke="#d63040" stroke-width="1.05"/></svg>
<div class="t" style="left:52.50px;top:67.86px;font-size:6.2px;line-height:7.44px;color:#1e1e1e;transform:scaleX(0.903);transform-origin:0 50%;">Phi20-1-lin-4-1</div>
<svg class="a" style="left:42.50px;top:77.81px" width="6" height="6"><path d="M0.8 0.8 L5.2 5.2 M5.2 0.8 L0.8 5.2" stroke="#d63040" stroke-width="1.05"/></svg>
<div class="t" style="left:52.50px;top:76.79px;font-size:6.2px;line-height:7.44px;color:#1e1e1e;transform:scaleX(0.903);transform-origin:0 50%;">Phi10-1-lin-2-1</div>
<svg class="a" style="left:33.50px;top:85.25px" width="9" height="9"><rect x="2" y="2" width="5" height="5" fill="#fcfcfc" stroke="#c8c8c8" stroke-width="0.7"/><path d="M2 4.5 L7 4.5 M4.5 2 L4.5 7" stroke="#6a6a6a" stroke-width="0.7" transform="translate(4.5 4.5) scale(0.6) translate(-4.5 -4.5)"/></svg>
<div class="t" style="left:43.00px;top:85.73px;font-size:6.2px;line-height:7.44px;color:#1e1e1e;transform:scaleX(0.903);transform-origin:0 50%;">Combo1-1</div>
<svg class="a" style="left:34.50px;top:94.68px" width="8.5" height="8"><path d="M1 7 L3 1 M4 7 L6 1 M0.5 3 L7 3 M0 5.5 L6.5 5.5" stroke="#3a9a3a" stroke-width="1"/></svg>
<div class="t" style="left:44.00px;top:94.66px;font-size:6.2px;line-height:7.44px;color:#1e1e1e;transform:scaleX(0.903);transform-origin:0 50%;">Position Constraints</div>
<svg class="a" style="left:26.00px;top:103.12px" width="9" height="9"><rect x="2" y="2" width="5" height="5" fill="#fcfcfc" stroke="#c8c8c8" stroke-width="0.7"/><path d="M2 4.5 L7 4.5 M4.5 2 L4.5 7" stroke="#6a6a6a" stroke-width="0.7" transform="translate(4.5 4.5) scale(0.6) translate(-4.5 -4.5)"/></svg>
<svg class="a" style="left:35.00px;top:103.62px" width="8.5" height="8"><circle cx="3.5" cy="2" r="1.5" fill="#c89a40"/><path d="M0.5 7.5 L1.5 4 L5.5 4 L6.5 7.5 Z" fill="#d8aa50" stroke="#7a5a20" stroke-width="0.5"/></svg>
<div class="t" style="left:44.00px;top:103.60px;font-size:6.2px;line-height:7.44px;color:#1e1e1e;transform:scaleX(0.903);transform-origin:0 50%;">Features (33)</div>
<svg class="a" style="left:34.50px;top:112.55px" width="8.5" height="8"><path d="M0.5 7 L0.5 3 L3 3 L5 0.5 L6 1 L5 3 L7.5 3.5 L7 7 Z" fill="#e8702a" stroke="#a04010" stroke-width="0.4"/></svg>
<div class="t" style="left:44.00px;top:112.53px;font-size:6.2px;line-height:7.44px;color:#1e1e1e;transform:scaleX(0.903);transform-origin:0 50%;">Sets</div>
<svg class="a" style="left:34.50px;top:121.49px" width="8.5" height="8"><path d="M0.5 7 L0.5 3 L3 3 L5 0.5 L6 1 L5 3 L7.5 3.5 L7 7 Z" fill="#e8702a" stroke="#a04010" stroke-width="0.4"/></svg>
<div class="t" style="left:44.00px;top:121.47px;font-size:6.2px;line-height:7.44px;color:#1e1e1e;transform:scaleX(0.903);transform-origin:0 50%;">Surfaces</div>
<svg class="a" style="left:35.00px;top:130.43px" width="8.5" height="8"><rect x="1" y="0.5" width="6" height="7" fill="#5a5a5a"/><path d="M2 2 L6 2 M2 4 L6 4 M2 6 L6 6" stroke="#c8c8c8" stroke-width="0.7"/></svg>
<div class="t" style="left:44.00px;top:130.41px;font-size:6.2px;line-height:7.44px;color:#1e1e1e;transform:scaleX(0.903);transform-origin:0 50%;">Connector Assignments</div>
<svg class="a" style="left:26.00px;top:138.86px" width="9" height="9"><rect x="2" y="2" width="5" height="5" fill="#fcfcfc" stroke="#c8c8c8" stroke-width="0.7"/><path d="M2 4.5 L7 4.5 M4.5 2 L4.5 7" stroke="#6a6a6a" stroke-width="0.7" transform="translate(4.5 4.5) scale(0.6) translate(-4.5 -4.5)"/></svg>
<svg class="a" style="left:34.50px;top:139.36px" width="8.5" height="8"><circle cx="3" cy="3" r="2.3" fill="#4a4a4a"/><rect x="3.5" y="4" width="4" height="3.5" fill="#6a6a6a"/></svg>
<div class="t" style="left:44.00px;top:139.34px;font-size:6.2px;line-height:7.44px;color:#1e1e1e;transform:scaleX(0.903);transform-origin:0 50%;">Engineering Features</div>
<svg class="a" style="left:17.50px;top:147.80px" width="9" height="9"><rect x="2" y="2" width="5" height="5" fill="#fcfcfc" stroke="#c8c8c8" stroke-width="0.7"/><path d="M2 4.5 L7 4.5" stroke="#6a6a6a" stroke-width="0.7" transform="translate(4.5 4.5) scale(0.6) translate(-4.5 -4.5)"/></svg>
<svg class="a" style="left:25.50px;top:148.30px" width="8.5" height="8"><circle cx="2" cy="4.5" r="1.5" fill="none" stroke="#333" stroke-width="0.8"/><circle cx="6" cy="2" r="1.5" fill="#444"/><path d="M3.5 4.5 L8.5 4.5" stroke="#333" stroke-width="0.8"/><circle cx="6.5" cy="6" r="1.2" fill="#555"/></svg>
<div class="t" style="left:36.50px;top:148.28px;font-size:6.2px;line-height:7.44px;color:#1e1e1e;transform:scaleX(0.903);transform-origin:0 50%;">Steps (2)</div>
<svg class="a" style="left:26.00px;top:156.73px" width="9" height="9"><rect x="2" y="2" width="5" height="5" fill="#fcfcfc" stroke="#c8c8c8" stroke-width="0.7"/><path d="M2 4.5 L7 4.5 M4.5 2 L4.5 7" stroke="#6a6a6a" stroke-width="0.7" transform="translate(4.5 4.5) scale(0.6) translate(-4.5 -4.5)"/></svg>
<svg class="a" style="left:34.50px;top:157.23px" width="8.5" height="8"><circle cx="1.7" cy="4" r="1.3" fill="none" stroke="#555" stroke-width="0.7"/><path d="M3 4 L7.5 4" stroke="#555" stroke-width="0.7"/></svg>
<div class="t" style="left:44.00px;top:157.21px;font-size:6.2px;line-height:7.44px;color:#1e1e1e;transform:scaleX(0.903);transform-origin:0 50%;">Initial</div>
<svg class="a" style="left:26.00px;top:165.67px" width="9" height="9"><rect x="2" y="2" width="5" height="5" fill="#fcfcfc" stroke="#c8c8c8" stroke-width="0.7"/><path d="M2 4.5 L7 4.5 M4.5 2 L4.5 7" stroke="#6a6a6a" stroke-width="0.7" transform="translate(4.5 4.5) scale(0.6) translate(-4.5 -4.5)"/></svg>
<svg class="a" style="left:34.50px;top:166.17px" width="8.5" height="8"><circle cx="1.7" cy="4" r="1.4" fill="none" stroke="#222" stroke-width="0.9"/><path d="M3 3.5 L7.5 3.5 M3 4.7 L7.5 4.7" stroke="#222" stroke-width="0.7"/></svg>
<div class="t" style="left:44.00px;top:166.15px;font-size:6.2px;line-height:7.44px;color:#1e1e1e;transform:scaleX(0.903);transform-origin:0 50%;"><u>Static step</u></div>
<svg class="a" style="left:17.50px;top:174.60px" width="9" height="9"><rect x="2" y="2" width="5" height="5" fill="#fcfcfc" stroke="#c8c8c8" stroke-width="0.7"/><path d="M2 4.5 L7 4.5 M4.5 2 L4.5 7" stroke="#6a6a6a" stroke-width="0.7" transform="translate(4.5 4.5) scale(0.6) translate(-4.5 -4.5)"/></svg>
<svg class="a" style="left:26.00px;top:175.10px" width="8.5" height="8"><rect x="0.5" y="0.5" width="5" height="6" fill="#fff" stroke="#8a5040" stroke-width="0.7"/><path d="M1.5 2 L4.5 2 M1.5 3.5 L4.5 3.5" stroke="#c05030" stroke-width="0.6"/><rect x="4" y="4" width="4" height="3.5" fill="#b06040"/></svg>
<div class="t" style="left:36.30px;top:175.08px;font-size:6.2px;line-height:7.44px;color:#1e1e1e;transform:scaleX(0.903);transform-origin:0 50%;">Field Output Requests (1)</div>
<svg class="a" style="left:17.50px;top:183.54px" width="9" height="9"><rect x="2" y="2" width="5" height="5" fill="#fcfcfc" stroke="#c8c8c8" stroke-width="0.7"/><path d="M2 4.5 L7 4.5 M4.5 2 L4.5 7" stroke="#6a6a6a" stroke-width="0.7" transform="translate(4.5 4.5) scale(0.6) translate(-4.5 -4.5)"/></svg>
<svg class="a" style="left:26.00px;top:184.04px" width="8.5" height="8"><rect x="0.5" y="0.5" width="5" height="6" fill="#fff" stroke="#8a5040" stroke-width="0.7"/><path d="M1.5 2 L4.5 2 M1.5 3.5 L4.5 3.5" stroke="#c05030" stroke-width="0.6"/><rect x="4" y="4" width="4" height="3.5" fill="#b06040"/></svg>
<div class="t" style="left:36.30px;top:184.02px;font-size:6.2px;line-height:7.44px;color:#1e1e1e;transform:scaleX(0.903);transform-origin:0 50%;">History Output Requests (1)</div>
<svg class="a" style="left:26.00px;top:192.97px" width="8.5" height="8"><path d="M1 1 L1 6.5 L7.5 6.5 L7.5 4.5" stroke="#3a4a70" stroke-width="0.9" fill="none"/><path d="M1 3.5 L4 3.5" stroke="#3a4a70" stroke-width="0.7"/></svg>
<div class="t" style="left:36.30px;top:192.95px;font-size:6.2px;line-height:7.44px;color:#1e1e1e;transform:scaleX(0.903);transform-origin:0 50%;">Time Points</div>
<svg class="a" style="left:26.00px;top:201.91px" width="8.5" height="8"><rect x="0.5" y="3" width="2" height="4.5" fill="#7a6a50"/><rect x="3" y="1" width="2" height="6.5" fill="#9a8a60"/><rect x="5.5" y="4" width="2" height="3.5" fill="#6a6a6a"/></svg>
<div class="t" style="left:36.30px;top:201.89px;font-size:6.2px;line-height:7.44px;color:#1e1e1e;transform:scaleX(0.903);transform-origin:0 50%;">ALE Adaptive Mesh Constraints</div>
<svg class="a" style="left:26.00px;top:210.84px" width="8.5" height="8"><path d="M1 1 L7 1 M1 7 L7 7 M4 1 L4 7" stroke="#3a6a3a" stroke-width="1.3"/></svg>
<div class="t" style="left:36.30px;top:210.82px;font-size:6.2px;line-height:7.44px;color:#1e1e1e;transform:scaleX(0.903);transform-origin:0 50%;">Interactions</div>
<svg class="a" style="left:26.00px;top:219.78px" width="8.5" height="8"><path d="M1 1 L6 1 M1 7 L6 7 M3.5 1 L3.5 7" stroke="#4a7a4a" stroke-width="1.2"/><rect x="5" y="4" width="3" height="3.5" fill="#7a8a50"/></svg>
<div class="t" style="left:36.30px;top:219.76px;font-size:6.2px;line-height:7.44px;color:#1e1e1e;transform:scaleX(0.903);transform-origin:0 50%;">Interaction Properties</div>
<svg class="a" style="left:26.00px;top:228.71px" width="8.5" height="8"><path d="M1 1 L1 7 M6 1 L6 7" stroke="#4a4a2a" stroke-width="1"/><rect x="2" y="2" width="3" height="4" fill="#c8a830"/></svg>
<div class="t" style="left:36.30px;top:228.69px;font-size:6.2px;line-height:7.44px;color:#1e1e1e;transform:scaleX(0.903);transform-origin:0 50%;">Contact Controls</div>
<svg class="a" style="left:26.00px;top:237.65px" width="8.5" height="8"><rect x="0.5" y="2" width="6" height="5.5" fill="#f0d060" stroke="#8a7020" stroke-width="0.5"/><path d="M2 5 L5 1" stroke="#c03020" stroke-width="1"/></svg>
<div class="t" style="left:36.30px;top:237.63px;font-size:6.2px;line-height:7.44px;color:#1e1e1e;transform:scaleX(0.903);transform-origin:0 50%;">Contact Initializations</div>
<svg class="a" style="left:26.00px;top:246.58px" width="8.5" height="8"><rect x="2" y="0.5" width="5" height="7" fill="#e8d890" stroke="#7a6a30" stroke-width="0.6"/><path d="M0 4 L2.5 4" stroke="#333" stroke-width="1"/></svg>
<div class="t" style="left:36.30px;top:246.56px;font-size:6.2px;line-height:7.44px;color:#1e1e1e;transform:scaleX(0.903);transform-origin:0 50%;">Constraints</div>
<svg class="a" style="left:26.00px;top:255.52px" width="8.5" height="8"><rect x="0.5" y="0.5" width="7" height="7" fill="#444"/><path d="M2.5 0.5 L2.5 7.5 M5 0.5 L5 7.5" stroke="#aaa" stroke-width="0.6"/></svg>
<div class="t" style="left:36.30px;top:255.50px;font-size:6.2px;line-height:7.44px;color:#1e1e1e;transform:scaleX(0.903);transform-origin:0 50%;">Connector Sections</div>
<svg class="a" style="left:17.50px;top:263.95px" width="9" height="9"><rect x="2" y="2" width="5" height="5" fill="#fcfcfc" stroke="#c8c8c8" stroke-width="0.7"/><path d="M2 4.5 L7 4.5 M4.5 2 L4.5 7" stroke="#6a6a6a" stroke-width="0.7" transform="translate(4.5 4.5) scale(0.6) translate(-4.5 -4.5)"/></svg>
<svg class="a" style="left:26.00px;top:264.45px" width="8.5" height="8"><path d="M6.5 1.2 C5 0.5 4 1 3.8 2.5 L3 7.5 C2.8 8 2 8 1 7.5 M2 3.3 L5.5 3.3" stroke="#111" stroke-width="1" fill="none"/></svg>
<div class="t" style="left:36.30px;top:264.43px;font-size:6.2px;line-height:7.44px;color:#1e1e1e;transform:scaleX(0.903);transform-origin:0 50%;">Fields</div>
<svg class="a" style="left:26.00px;top:273.39px" width="8.5" height="8"><path d="M1 0.5 L1 7 L7.5 7 M1 4 L3 1.5 L5 5 L7 2" stroke="#666" stroke-width="0.8" fill="none"/></svg>
<div class="t" style="left:36.30px;top:273.37px;font-size:6.2px;line-height:7.44px;color:#1e1e1e;transform:scaleX(0.903);transform-origin:0 50%;">Amplitudes</div>
<svg class="a" style="left:17.50px;top:281.82px" width="9" height="9"><rect x="2" y="2" width="5" height="5" fill="#fcfcfc" stroke="#c8c8c8" stroke-width="0.7"/><path d="M2 4.5 L7 4.5 M4.5 2 L4.5 7" stroke="#6a6a6a" stroke-width="0.7" transform="translate(4.5 4.5) scale(0.6) translate(-4.5 -4.5)"/></svg>
<svg class="a" style="left:26.00px;top:282.32px" width="8.5" height="8"><path d="M1 0.5 L1 7 L7.5 7" stroke="#555" stroke-width="0.8" fill="none"/><rect x="3" y="2" width="2" height="4" fill="#8a7a60"/><rect x="5.5" y="3" width="2" height="3" fill="#6a6a6a"/></svg>
<div class="t" style="left:36.30px;top:282.30px;font-size:6.2px;line-height:7.44px;color:#1e1e1e;transform:scaleX(0.903);transform-origin:0 50%;">Loads (1)</div>
<svg class="a" style="left:17.50px;top:290.76px" width="9" height="9"><rect x="2" y="2" width="5" height="5" fill="#fcfcfc" stroke="#c8c8c8" stroke-width="0.7"/><path d="M2 4.5 L7 4.5" stroke="#6a6a6a" stroke-width="0.7" transform="translate(4.5 4.5) scale(0.6) translate(-4.5 -4.5)"/></svg>
<svg class="a" style="left:26.00px;top:291.26px" width="8.5" height="8"><path d="M1 0.5 L1 7 L7.5 7" stroke="#555" stroke-width="0.8" fill="none"/><rect x="2.5" y="3" width="4.5" height="3" fill="#a07a50"/></svg>
<div class="a" style="left:35.00px;top:290.66px;width:20.50px;height:8.60px;background:#3a8ee8"></div>
<div class="t" style="left:36.30px;top:291.24px;font-size:6.2px;line-height:7.44px;color:#fff;transform:scaleX(0.903);transform-origin:0 50%;">BCs (2)</div>
<svg class="a" style="left:26.00px;top:299.69px" width="9" height="9"><rect x="2" y="2" width="5" height="5" fill="#fcfcfc" stroke="#c8c8c8" stroke-width="0.7"/><path d="M2 4.5 L7 4.5 M4.5 2 L4.5 7" stroke="#6a6a6a" stroke-width="0.7" transform="translate(4.5 4.5) scale(0.6) translate(-4.5 -4.5)"/></svg>
<div class="t" style="left:35.50px;top:300.17px;font-size:6.2px;line-height:7.44px;color:#1e1e1e;transform:scaleX(0.903);transform-origin:0 50%;">HS</div>
<svg class="a" style="left:26.00px;top:308.63px" width="9" height="9"><rect x="2" y="2" width="5" height="5" fill="#fcfcfc" stroke="#c8c8c8" stroke-width="0.7"/><path d="M2 4.5 L7 4.5 M4.5 2 L4.5 7" stroke="#6a6a6a" stroke-width="0.7" transform="translate(4.5 4.5) scale(0.6) translate(-4.5 -4.5)"/></svg>
<div class="t" style="left:35.50px;top:309.11px;font-size:6.2px;line-height:7.44px;color:#1e1e1e;transform:scaleX(0.903);transform-origin:0 50%;">SS</div>
<svg class="a" style="left:26.00px;top:318.06px" width="8.5" height="8"><path d="M1 0.5 L1 7 L7.5 7" stroke="#555" stroke-width="0.8" fill="none"/><rect x="2.5" y="3.5" width="4.5" height="2.5" fill="#8a6a40"/></svg>
<div class="t" style="left:36.30px;top:318.04px;font-size:6.2px;line-height:7.44px;color:#1e1e1e;transform:scaleX(0.903);transform-origin:0 50%;">Predefined Fields</div>
<svg class="a" style="left:26.00px;top:327.00px" width="8.5" height="8"><rect x="0.5" y="0.5" width="5" height="5" fill="#555"/><rect x="3" y="3" width="5" height="4.5" fill="#8a8a9a" stroke="#333" stroke-width="0.5"/></svg>
<div class="t" style="left:36.30px;top:326.98px;font-size:6.2px;line-height:7.44px;color:#1e1e1e;transform:scaleX(0.903);transform-origin:0 50%;">Remeshing Rules</div>
<svg class="a" style="left:26.00px;top:335.93px" width="8.5" height="8"><path d="M1 0.5 L1 7 L7.5 7" stroke="#555" stroke-width="0.8" fill="none"/><path d="M2.5 5.5 L4 2 L6 5" stroke="#9a7040" stroke-width="1" fill="none"/></svg>
<div class="t" style="left:36.30px;top:335.91px;font-size:6.2px;line-height:7.44px;color:#1e1e1e;transform:scaleX(0.903);transform-origin:0 50%;">Sketches</div>
<svg class="a" style="left:10.00px;top:344.87px" width="8.5" height="8"><path d="M1 2 L4 5 L7 0.5 M4 5 L5 7.5" stroke="#202020" stroke-width="1.1" fill="none"/></svg>
<div class="t" style="left:20.00px;top:344.85px;font-size:6.2px;line-height:7.44px;color:#1e1e1e;transform:scaleX(0.903);transform-origin:0 50%;">Annotations</div>
<svg class="a" style="left:2.00px;top:353.30px" width="9" height="9"><rect x="2" y="2" width="5" height="5" fill="#fcfcfc" stroke="#c8c8c8" stroke-width="0.7"/><path d="M2 4.5 L7 4.5" stroke="#6a6a6a" stroke-width="0.7" transform="translate(4.5 4.5) scale(0.6) translate(-4.5 -4.5)"/></svg>
<svg class="a" style="left:10.00px;top:353.80px" width="8.5" height="8"><rect x="0.5" y="0.5" width="2.8" height="7" rx="1.3" fill="#1a4a8a"/><rect x="4.5" y="0.5" width="2.8" height="7" rx="1.3" fill="#1a4a8a"/><path d="M1 4 L7 4" stroke="#cfe" stroke-width="0.6"/></svg>
<div class="t" style="left:20.00px;top:353.78px;font-size:6.2px;line-height:7.44px;color:#1e1e1e;transform:scaleX(0.903);transform-origin:0 50%;">Analysis</div>
<svg class="a" style="left:18.50px;top:362.74px" width="8.5" height="8"><rect x="1.5" y="0.5" width="5" height="4.5" fill="#5a5ab8"/><rect x="0.5" y="5.5" width="7" height="2" fill="#3a3a70"/></svg>
<div class="t" style="left:28.30px;top:362.72px;font-size:6.2px;line-height:7.44px;color:#1e1e1e;transform:scaleX(0.903);transform-origin:0 50%;">Jobs</div>
</div>
<div class="a" style="left:173.00px;top:63.00px;width:31.00px;height:386.00px;background:#f6f7f8"></div>
<svg class="a" style="left:178px;top:66.5px" width="10" height="9"><path d="M1 0.5 L1 8.5 L9.5 8.5 L9.5 6 L4 6 L4 0.5 Z" fill="#c8d0e0" stroke="#6a7a9a" stroke-width="0.6"/><rect x="1" y="5.5" width="8.5" height="3" fill="#7a90c0"/><rect x="6" y="2" width="1.5" height="4" fill="#7a7a80"/></svg>
<div class="a" style="left:191.00px;top:66.50px;width:10.00px;height:8.50px;background:linear-gradient(#3a7ab8 0,#3a7ab8 30%,#f2eed8 30%);border:0.8px solid #8a8a80"></div>
<div class="a" style="left:192.50px;top:70.50px;width:7.00px;height:3.50px;background:repeating-linear-gradient(90deg,#6a7040 0 2px,#f2eed8 2px 3px);opacity:.75"></div>
<svg class="a" style="left:178px;top:81.5px" width="10" height="9"><path d="M1 0.5 L1 8.5 L9.5 8.5 L9.5 6 L4 6 L4 0.5 Z" fill="#c8d0e0" stroke="#6a7a9a" stroke-width="0.6"/><rect x="1" y="5.5" width="8.5" height="3" fill="#8a9ac0"/><rect x="6" y="2" width="1.5" height="4" fill="#7a7a80"/></svg>
<div class="a" style="left:191.00px;top:81.50px;width:10.00px;height:8.50px;background:linear-gradient(#3a7ab8 0,#3a7ab8 30%,#f2eed8 30%);border:0.8px solid #8a8a80"></div>
<div class="a" style="left:192.50px;top:85.50px;width:7.00px;height:3.50px;background:repeating-linear-gradient(90deg,#6a7040 0 2px,#f2eed8 2px 3px);opacity:.75"></div>
<svg class="a" style="left:178px;top:97px" width="10" height="9"><path d="M1 0.5 L1 8.5 L9.5 8.5 L9.5 6 L4 6 L4 0.5 Z" fill="#c8d0e0" stroke="#6a7a9a" stroke-width="0.6"/><rect x="1" y="5.5" width="8.5" height="3" fill="#6aaa9a"/><rect x="6" y="2" width="1.5" height="4" fill="#7a7a80"/></svg>
<div class="a" style="left:191.00px;top:97.00px;width:10.00px;height:8.50px;background:linear-gradient(#3a7ab8 0,#3a7ab8 30%,#f2eed8 30%);border:0.8px solid #8a8a80"></div>
<div class="a" style="left:192.50px;top:101.00px;width:7.00px;height:3.50px;background:repeating-linear-gradient(90deg,#6a7040 0 2px,#f2eed8 2px 3px);opacity:.75"></div>
<svg class="a" style="left:178px;top:112.5px" width="10" height="9"><path d="M1 0.5 L1 8.5 L9.5 8.5 L9.5 6 L4 6 L4 0.5 Z" fill="#c8d0e0" stroke="#6a7a9a" stroke-width="0.6"/><rect x="1" y="5.5" width="8.5" height="3" fill="#8a94b8"/><rect x="6" y="2" width="1.5" height="4" fill="#7a7a80"/></svg>
<div class="a" style="left:191.00px;top:112.50px;width:10.00px;height:8.50px;background:linear-gradient(#3a7ab8 0,#3a7ab8 30%,#f2eed8 30%);border:0.8px solid #8a8a80"></div>
<div class="a" style="left:192.50px;top:116.50px;width:7.00px;height:3.50px;background:repeating-linear-gradient(90deg,#6a7040 0 2px,#f2eed8 2px 3px);opacity:.75"></div>
<div class="a" style="left:176.00px;top:124.00px;width:26.00px;height:0.80px;background:#d4d6da"></div>
<div class="a" style="left:178.00px;top:129.50px;width:9.00px;height:9.00px;background:linear-gradient(#f0d890,#c8a040);border-radius:1px;opacity:.9"></div>
<div class="a" style="left:180.00px;top:129.50px;width:4.00px;height:4.00px;background:#d8b050"></div>
<div class="a" style="left:191.00px;top:131.50px;width:8.00px;height:7.00px;background:linear-gradient(#f0d890,#c8a040);border-radius:1px"></div>
<div class="a" style="left:196.00px;top:134.50px;width:4.00px;height:4.00px;background:#6a5a3a"></div>
<svg class="a" style="left:178px;top:143px" width="10" height="10"><rect x="1" y="6" width="8" height="3.5" fill="#e8c870"/><path d="M2 7 L8 1" stroke="#4a4a4a" stroke-width="1.4"/><circle cx="8" cy="1.5" r="1.2" fill="#a07030"/></svg>
<div class="a" style="left:176.00px;top:154.00px;width:26.00px;height:0.80px;background:#d4d6da"></div>
<svg class="a" style="left:177px;top:158px" width="11" height="11"><path d="M1 1 L5 4 L9 9" stroke="#4a6a9a" stroke-width="1.1" fill="none" stroke-dasharray="1.5 1"/><circle cx="5" cy="4" r="1.2" fill="#3a7ad0"/><circle cx="9" cy="9" r="1" fill="#333"/></svg>
<div class="a" style="left:191.00px;top:161.00px;width:8.00px;height:7.00px;background:linear-gradient(#f0d890,#c8a040);border-radius:1px"></div>
<div class="a" style="left:196.00px;top:164.00px;width:4.00px;height:4.00px;background:#6a5a3a"></div>
<div class="a" style="left:178.00px;top:174.00px;width:8.00px;height:7.00px;background:linear-gradient(#f0d890,#c8a040);border-radius:1px"></div>
<div class="a" style="left:183.00px;top:177.00px;width:4.00px;height:4.00px;background:#6a5a3a"></div>
<div class="a" style="left:191.00px;top:174.00px;width:8.00px;height:7.00px;background:linear-gradient(#f0d890,#c8a040);border-radius:1px"></div>
<div class="a" style="left:196.00px;top:177.00px;width:4.00px;height:4.00px;background:#6a5a3a"></div>
<div class="a" style="left:176.00px;top:183.50px;width:26.00px;height:0.80px;background:#d4d6da"></div>
<div class="t" style="left:177.00px;top:187.22px;font-size:3.8px;line-height:4.56px;color:#333;">(XYZ)</div>
<div class="a" style="left:180.00px;top:192.00px;width:4.00px;height:3.00px;background:#4a8ad0;border-radius:50%"></div>
<svg class="a" style="left:190px;top:187px" width="11" height="11"><path d="M5.5 6 L5.5 1 M5.5 6 L1.5 9.5 M5.5 6 L9.5 9.5" stroke="#2a3a60" stroke-width="0.9" fill="none" stroke-dasharray="1.2 0.8"/><circle cx="5.5" cy="1" r="1" fill="#2a6ad0"/><circle cx="1.5" cy="9.5" r="1" fill="#333"/><circle cx="9.5" cy="9.5" r="1" fill="#333"/></svg>
<svg class="a" style="left:177px;top:199px" width="11" height="11"><path d="M5 7 L9 2" stroke="#60a040" stroke-width="1.2"/><path d="M5 7 L1 5" stroke="#3a6ad0" stroke-width="1.2"/><path d="M5 7 L8 10" stroke="#333" stroke-width="1"/><rect x="6" y="3" width="3" height="3" fill="#c8a040"/></svg>
<svg class="a" style="left:190px;top:199px" width="11" height="11"><path d="M5.5 6 L5.5 1 M5.5 6 L1.5 9.5 M5.5 6 L9.5 9.5" stroke="#2a3a60" stroke-width="0.9" fill="none" stroke-dasharray="1.2 0.8"/><circle cx="5.5" cy="1" r="1" fill="#2a6ad0"/><circle cx="1.5" cy="9.5" r="1" fill="#333"/><circle cx="9.5" cy="9.5" r="1" fill="#333"/></svg>
<div class="a" style="left:173.00px;top:434.00px;width:429.00px;height:14.50px;background:#f7f8f9"></div>
<div class="t" style="left:178.50px;top:438.90px;font-size:6.0px;line-height:7.20px;color:#1a1a1a;transform:scaleX(0.905);transform-origin:0 50%;">Saving database...</div>
<div class="a" style="left:518.00px;top:436.00px;width:47.00px;height:11.50px;background:linear-gradient(#d2d4d6,#c2c4c6);border:1px solid #b8babc;border-radius:1px"></div>
<div class="a" style="left:519.50px;top:437.50px;width:3.00px;height:8.00px;background:#e8e8e8;opacity:.6"></div>
<div class="a" style="left:554.00px;top:440.00px;width:5.00px;height:6.00px;background:#18d028"></div>
<svg class="a" style="left:574px;top:434px" width="28" height="16"><text x="3" y="9.5" font-size="10" font-style="italic" font-weight="bold" fill="#2a3a8a" font-family="Liberation Serif">D</text><text x="9" y="7.5" font-size="8" font-style="italic" font-weight="bold" fill="#e0a020" font-family="Liberation Serif">S</text><path d="M7 3 Q10 0.5 13 2" stroke="#c03020" stroke-width="1" fill="none"/><text x="5" y="14.5" font-size="3.6" fill="#2a3a8a" font-family="Liberation Sans" font-weight="bold">SIMULIA</text></svg>
<div class="a" style="left:0.00px;top:452.00px;width:602.00px;height:28.00px;background:#f4f5f6"></div>
<div class="a" style="left:19.00px;top:452.50px;width:583.00px;height:27.50px;background:#fff;border-top:1px solid #c4c6ca;border-left:1px solid #c4c6ca"></div>
<div class="a" style="left:5.50px;top:456.00px;width:10.00px;height:10.00px;background:linear-gradient(135deg,#f4f4e8,#c8ccb0);border:1px solid #9a9a80"></div>
<div class="a" style="left:4.00px;top:463.00px;width:4.00px;height:3.00px;background:#7a8a30;border-radius:1px"></div>
<div class="a" style="left:4.50px;top:471.50px;width:12.00px;height:9.00px;background:#e8d820;border:1px solid #7a6a10"></div>
<div class="t" style="left:5.50px;top:473.20px;font-size:5.5px;line-height:6.60px;color:#333;">&#187;&#187;</div>
<div class="t" style="left:21.80000000000001px;top:455.90px;-webkit-text-stroke:0;font-family:'Liberation Mono',monospace;font-size:6.28px;line-height:6.6px;color:#2a2a2a">Global seeds have been assigned.</div>
<div class="t" style="left:21.80000000000001px;top:461.50px;-webkit-text-stroke:0;font-family:'Liberation Mono',monospace;font-size:6.28px;line-height:6.6px;color:#2a2a2a">91248 elements have been generated on instance: Combo1-1</div>
<div class="t" style="left:21.80000000000001px;top:467.50px;-webkit-text-stroke:0;font-family:'Liberation Mono',monospace;font-size:6.28px;line-height:6.6px;color:#2a2a2a">The model database has been saved to &#39;D:\Lots Of Extra (please make order here)\new class\school\MASTER THESIS\Abaqus</div>
<div class="t" style="left:21.80000000000001px;top:473.50px;-webkit-text-stroke:0;font-family:'Liberation Mono',monospace;font-size:6.28px;line-height:6.6px;color:#2a2a2a">files\reinforced_concrete_beam_solid_rebars.cae&#39;.</div>
<div class="a" style="left:502.30px;top:457.40px;width:98.50px;height:18.60px;background:rgba(100,100,100,.93);border-radius:2px"></div>
<div class="t" style="left:504.50px;top:462.62px;font-size:6.8px;line-height:8.16px;color:#e8e8e8;">01:05:25</div>
<div class="a" style="left:534.20px;top:460.00px;width:0.90px;height:13.00px;background:#bdbdbd"></div>
<div class="t" style="left:539.60px;top:462.74px;font-size:6.6px;line-height:7.92px;color:#e8e8e8;">Stop recording</div>
<div class="a" style="left:589.00px;top:462.50px;width:9.50px;height:9.50px;background:#dc3a2a;border:1px solid #a02010"></div>
<svg class="a" style="left:204px;top:63px" width="398" height="371" viewBox="359 63 398 371"><defs><linearGradient id="bg" x1="0" y1="0" x2="0" y2="1"><stop offset="0" stop-color="#1c2c42"/><stop offset="0.4" stop-color="#29394e"/><stop offset="0.58" stop-color="#303f57"/><stop offset="0.72" stop-color="#4c5a72"/><stop offset="0.86" stop-color="#74849b"/><stop offset="1" stop-color="#a0b0c0"/></linearGradient></defs><rect x="359" y="63" width="398" height="371" fill="url(#bg)"/><polygon points="371.00,130.00 735.00,338.00 735.00,369.50 372.00,157.50" fill="#1a55b0"/><polygon points="371.00,130.00 383.00,127.50 749.00,333.00 735.00,338.00" fill="#1b5ab4"/><polygon points="735.00,338.00 749.00,333.00 750.00,362.00 735.00,369.50" fill="#173f88"/><line x1="371.13" y1="133.57" x2="735.00" y2="342.10" stroke="#2a6cc8" stroke-width="0.9"/><line x1="371.20" y1="135.50" x2="735.00" y2="344.30" stroke="#2a6cc8" stroke-width="0.9"/><line x1="371.50" y1="143.75" x2="735.00" y2="353.75" stroke="#2a6cc8" stroke-width="0.9"/><line x1="371.58" y1="145.95" x2="735.00" y2="356.27" stroke="#2a6cc8" stroke-width="0.9"/><line x1="371.88" y1="154.20" x2="735.00" y2="365.72" stroke="#2a6cc8" stroke-width="0.9"/><line x1="371.94" y1="155.85" x2="735.00" y2="367.61" stroke="#2a6cc8" stroke-width="0.9"/><line x1="371.03" y1="130.82" x2="735.00" y2="338.94" stroke="#44a6fa" stroke-width="1.2"/><line x1="371.29" y1="137.97" x2="735.00" y2="347.13" stroke="#44a6fa" stroke-width="1.2"/><line x1="371.38" y1="140.45" x2="735.00" y2="349.97" stroke="#44a6fa" stroke-width="1.2"/><line x1="371.69" y1="148.97" x2="735.00" y2="359.74" stroke="#44a6fa" stroke-width="1.2"/><line x1="371.78" y1="151.45" x2="735.00" y2="362.57" stroke="#44a6fa" stroke-width="1.2"/><line x1="381.56" y1="127.80" x2="747.32" y2="333.60" stroke="#44a6fa" stroke-width="1.2"/><line x1="378.32" y1="128.47" x2="743.54" y2="334.95" stroke="#44a6fa" stroke-width="1.2"/><line x1="375.08" y1="129.15" x2="739.76" y2="336.30" stroke="#44a6fa" stroke-width="1.2"/><line x1="371.96" y1="129.80" x2="736.12" y2="337.60" stroke="#44a6fa" stroke-width="1.2"/><line x1="735.00" y1="344.30" x2="749.20" y2="338.80" stroke="#2a64b8" stroke-width="0.7"/><line x1="735.00" y1="352.18" x2="749.45" y2="346.05" stroke="#2a64b8" stroke-width="0.7"/><line x1="735.00" y1="360.05" x2="749.70" y2="353.30" stroke="#2a64b8" stroke-width="0.7"/><line x1="739.90" y1="336.25" x2="740.25" y2="366.88" stroke="#102a60" stroke-width="0.7"/><line x1="744.80" y1="334.50" x2="745.50" y2="364.25" stroke="#102a60" stroke-width="0.7"/><polyline points="372.00,157.50 735.00,369.50 750.00,362.00" fill="none" stroke="#0e2a55" stroke-width="1"/><polyline points="421.00,148.84 410.00,152.29 410.00,179.69" fill="none" stroke="#0c2a52" stroke-width="0.75"/><polyline points="459.00,170.17 448.00,174.00 448.00,201.89" fill="none" stroke="#0c2a52" stroke-width="0.75"/><polyline points="541.30,216.38 530.30,221.03 530.30,249.95" fill="none" stroke="#0c2a52" stroke-width="0.75"/><polyline points="636.00,269.55 625.00,275.14 625.00,305.26" fill="none" stroke="#0c2a52" stroke-width="0.75"/><polyline points="688.60,299.09 677.60,305.20 677.60,335.98" fill="none" stroke="#0c2a52" stroke-width="0.75"/><g stroke="#8ac060" stroke-width="0.9" fill="none"><line x1="382.5" y1="129" x2="383" y2="152.5"/><line x1="382.5" y1="152" x2="362" y2="163"/><line x1="382.5" y1="152" x2="404" y2="162"/></g><circle cx="403.5" cy="162" r="1.9" fill="#8ac850"/><text x="402" y="164" font-size="4" fill="#cfe880" font-family="Liberation Sans" font-weight="bold">Z</text><circle cx="362" cy="162.5" r="2" fill="#a8b040"/><text x="360.5" y="164.5" font-size="4" fill="#e0e070" font-family="Liberation Sans" font-weight="bold">X</text><circle cx="376" cy="160" r="1.6" fill="#e09030"/><line x1="391.00" y1="126.99" x2="391.00" y2="132.19" stroke="#d86a98" stroke-width="0.8" stroke-opacity="0.6"/><circle cx="391.00" cy="132.99" r="1.5" fill="#dcc8ff" fill-opacity="0.95"/><line x1="386.80" y1="129.19" x2="386.80" y2="134.39" stroke="#d86a98" stroke-width="0.8" stroke-opacity="0.6"/><circle cx="386.80" cy="135.19" r="1.5" fill="#dcc8ff" fill-opacity="0.95"/><line x1="382.60" y1="130.89" x2="382.60" y2="136.09" stroke="#d86a98" stroke-width="0.8" stroke-opacity="0.6"/><circle cx="382.60" cy="136.89" r="1.5" fill="#dcc8ff" fill-opacity="0.95"/><line x1="402.00" y1="133.17" x2="402.00" y2="138.37" stroke="#d86a98" stroke-width="0.8" stroke-opacity="0.6"/><circle cx="402.00" cy="139.17" r="1.5" fill="#dcc8ff" fill-opacity="0.95"/><line x1="397.80" y1="135.37" x2="397.80" y2="140.57" stroke="#d86a98" stroke-width="0.8" stroke-opacity="0.6"/><circle cx="397.80" cy="141.37" r="1.5" fill="#dcc8ff" fill-opacity="0.95"/><line x1="393.60" y1="137.07" x2="393.60" y2="142.27" stroke="#d86a98" stroke-width="0.8" stroke-opacity="0.6"/><circle cx="393.60" cy="143.07" r="1.5" fill="#dcc8ff" fill-opacity="0.95"/><line x1="415.00" y1="140.47" x2="415.00" y2="145.67" stroke="#d86a98" stroke-width="0.8" stroke-opacity="0.6"/><circle cx="415.00" cy="146.47" r="1.5" fill="#dcc8ff" fill-opacity="0.95"/><line x1="410.80" y1="142.67" x2="410.80" y2="147.87" stroke="#d86a98" stroke-width="0.8" stroke-opacity="0.6"/><circle cx="410.80" cy="148.67" r="1.5" fill="#dcc8ff" fill-opacity="0.95"/><line x1="406.60" y1="144.37" x2="406.60" y2="149.57" stroke="#d86a98" stroke-width="0.8" stroke-opacity="0.6"/><circle cx="406.60" cy="150.37" r="1.5" fill="#dcc8ff" fill-opacity="0.95"/><line x1="429.00" y1="148.33" x2="429.00" y2="153.53" stroke="#d86a98" stroke-width="0.8" stroke-opacity="0.6"/><circle cx="429.00" cy="154.33" r="1.5" fill="#dcc8ff" fill-opacity="0.95"/><line x1="424.80" y1="150.53" x2="424.80" y2="155.73" stroke="#d86a98" stroke-width="0.8" stroke-opacity="0.6"/><circle cx="424.80" cy="156.53" r="1.5" fill="#dcc8ff" fill-opacity="0.95"/><line x1="420.60" y1="152.23" x2="420.60" y2="157.43" stroke="#d86a98" stroke-width="0.8" stroke-opacity="0.6"/><circle cx="420.60" cy="158.23" r="1.5" fill="#dcc8ff" fill-opacity="0.95"/><line x1="441.00" y1="155.07" x2="441.00" y2="160.27" stroke="#d86a98" stroke-width="0.8" stroke-opacity="0.6"/><circle cx="441.00" cy="161.07" r="1.5" fill="#dcc8ff" fill-opacity="0.95"/><line x1="436.80" y1="157.27" x2="436.80" y2="162.47" stroke="#d86a98" stroke-width="0.8" stroke-opacity="0.6"/><circle cx="436.80" cy="163.27" r="1.5" fill="#dcc8ff" fill-opacity="0.95"/><line x1="432.60" y1="158.97" x2="432.60" y2="164.17" stroke="#d86a98" stroke-width="0.8" stroke-opacity="0.6"/><circle cx="432.60" cy="164.97" r="1.5" fill="#dcc8ff" fill-opacity="0.95"/><line x1="454.00" y1="162.36" x2="454.00" y2="167.56" stroke="#d86a98" stroke-width="0.8" stroke-opacity="0.6"/><circle cx="454.00" cy="168.36" r="1.5" fill="#dcc8ff" fill-opacity="0.95"/><line x1="449.80" y1="164.56" x2="449.80" y2="169.76" stroke="#d86a98" stroke-width="0.8" stroke-opacity="0.6"/><circle cx="449.80" cy="170.56" r="1.5" fill="#dcc8ff" fill-opacity="0.95"/><line x1="445.60" y1="166.26" x2="445.60" y2="171.46" stroke="#d86a98" stroke-width="0.8" stroke-opacity="0.6"/><circle cx="445.60" cy="172.26" r="1.5" fill="#dcc8ff" fill-opacity="0.95"/><line x1="475.50" y1="174.44" x2="475.50" y2="179.64" stroke="#d86a98" stroke-width="0.8" stroke-opacity="0.6"/><circle cx="475.50" cy="180.44" r="1.5" fill="#dcc8ff" fill-opacity="0.95"/><line x1="471.30" y1="176.64" x2="471.30" y2="181.84" stroke="#d86a98" stroke-width="0.8" stroke-opacity="0.6"/><circle cx="471.30" cy="182.64" r="1.5" fill="#dcc8ff" fill-opacity="0.95"/><line x1="467.10" y1="178.34" x2="467.10" y2="183.54" stroke="#d86a98" stroke-width="0.8" stroke-opacity="0.6"/><circle cx="467.10" cy="184.34" r="1.5" fill="#dcc8ff" fill-opacity="0.95"/><line x1="502.60" y1="189.65" x2="502.60" y2="194.85" stroke="#d86a98" stroke-width="0.8" stroke-opacity="0.6"/><circle cx="502.60" cy="195.65" r="1.5" fill="#dcc8ff" fill-opacity="0.95"/><line x1="498.40" y1="191.85" x2="498.40" y2="197.05" stroke="#d86a98" stroke-width="0.8" stroke-opacity="0.6"/><circle cx="498.40" cy="197.85" r="1.5" fill="#dcc8ff" fill-opacity="0.95"/><line x1="494.20" y1="193.55" x2="494.20" y2="198.75" stroke="#d86a98" stroke-width="0.8" stroke-opacity="0.6"/><circle cx="494.20" cy="199.55" r="1.5" fill="#dcc8ff" fill-opacity="0.95"/><line x1="532.40" y1="206.38" x2="532.40" y2="211.58" stroke="#d86a98" stroke-width="0.8" stroke-opacity="0.6"/><circle cx="532.40" cy="212.38" r="1.5" fill="#dcc8ff" fill-opacity="0.95"/><line x1="528.20" y1="208.58" x2="528.20" y2="213.78" stroke="#d86a98" stroke-width="0.8" stroke-opacity="0.6"/><circle cx="528.20" cy="214.58" r="1.5" fill="#dcc8ff" fill-opacity="0.95"/><line x1="524.00" y1="210.28" x2="524.00" y2="215.48" stroke="#d86a98" stroke-width="0.8" stroke-opacity="0.6"/><circle cx="524.00" cy="216.28" r="1.5" fill="#dcc8ff" fill-opacity="0.95"/><line x1="562.40" y1="223.23" x2="562.40" y2="228.43" stroke="#d86a98" stroke-width="0.8" stroke-opacity="0.6"/><circle cx="562.40" cy="229.23" r="1.5" fill="#dcc8ff" fill-opacity="0.95"/><line x1="558.20" y1="225.43" x2="558.20" y2="230.63" stroke="#d86a98" stroke-width="0.8" stroke-opacity="0.6"/><circle cx="558.20" cy="231.43" r="1.5" fill="#dcc8ff" fill-opacity="0.95"/><line x1="554.00" y1="227.13" x2="554.00" y2="232.33" stroke="#d86a98" stroke-width="0.8" stroke-opacity="0.6"/><circle cx="554.00" cy="233.13" r="1.5" fill="#dcc8ff" fill-opacity="0.95"/><line x1="593.00" y1="240.41" x2="593.00" y2="245.61" stroke="#d86a98" stroke-width="0.8" stroke-opacity="0.6"/><circle cx="593.00" cy="246.41" r="1.5" fill="#dcc8ff" fill-opacity="0.95"/><line x1="588.80" y1="242.61" x2="588.80" y2="247.81" stroke="#d86a98" stroke-width="0.8" stroke-opacity="0.6"/><circle cx="588.80" cy="248.61" r="1.5" fill="#dcc8ff" fill-opacity="0.95"/><line x1="584.60" y1="244.31" x2="584.60" y2="249.51" stroke="#d86a98" stroke-width="0.8" stroke-opacity="0.6"/><circle cx="584.60" cy="250.31" r="1.5" fill="#dcc8ff" fill-opacity="0.95"/><line x1="626.00" y1="258.94" x2="626.00" y2="264.14" stroke="#d86a98" stroke-width="0.8" stroke-opacity="0.6"/><circle cx="626.00" cy="264.94" r="1.5" fill="#dcc8ff" fill-opacity="0.95"/><line x1="621.80" y1="261.14" x2="621.80" y2="266.34" stroke="#d86a98" stroke-width="0.8" stroke-opacity="0.6"/><circle cx="621.80" cy="267.14" r="1.5" fill="#dcc8ff" fill-opacity="0.95"/><line x1="617.60" y1="262.84" x2="617.60" y2="268.04" stroke="#d86a98" stroke-width="0.8" stroke-opacity="0.6"/><circle cx="617.60" cy="268.84" r="1.5" fill="#dcc8ff" fill-opacity="0.95"/><line x1="647.40" y1="270.95" x2="647.40" y2="276.15" stroke="#d86a98" stroke-width="0.8" stroke-opacity="0.6"/><circle cx="647.40" cy="276.95" r="1.5" fill="#dcc8ff" fill-opacity="0.95"/><line x1="643.20" y1="273.15" x2="643.20" y2="278.35" stroke="#d86a98" stroke-width="0.8" stroke-opacity="0.6"/><circle cx="643.20" cy="279.15" r="1.5" fill="#dcc8ff" fill-opacity="0.95"/><line x1="639.00" y1="274.85" x2="639.00" y2="280.05" stroke="#d86a98" stroke-width="0.8" stroke-opacity="0.6"/><circle cx="639.00" cy="280.85" r="1.5" fill="#dcc8ff" fill-opacity="0.95"/><line x1="664.10" y1="280.33" x2="664.10" y2="285.53" stroke="#d86a98" stroke-width="0.8" stroke-opacity="0.6"/><circle cx="664.10" cy="286.33" r="1.5" fill="#dcc8ff" fill-opacity="0.95"/><line x1="659.90" y1="282.53" x2="659.90" y2="287.73" stroke="#d86a98" stroke-width="0.8" stroke-opacity="0.6"/><circle cx="659.90" cy="288.53" r="1.5" fill="#dcc8ff" fill-opacity="0.95"/><line x1="655.70" y1="284.23" x2="655.70" y2="289.43" stroke="#d86a98" stroke-width="0.8" stroke-opacity="0.6"/><circle cx="655.70" cy="290.23" r="1.5" fill="#dcc8ff" fill-opacity="0.95"/><line x1="683.00" y1="290.94" x2="683.00" y2="296.14" stroke="#d86a98" stroke-width="0.8" stroke-opacity="0.6"/><circle cx="683.00" cy="296.94" r="1.5" fill="#dcc8ff" fill-opacity="0.95"/><line x1="678.80" y1="293.14" x2="678.80" y2="298.34" stroke="#d86a98" stroke-width="0.8" stroke-opacity="0.6"/><circle cx="678.80" cy="299.14" r="1.5" fill="#dcc8ff" fill-opacity="0.95"/><line x1="674.60" y1="294.84" x2="674.60" y2="300.04" stroke="#d86a98" stroke-width="0.8" stroke-opacity="0.6"/><circle cx="674.60" cy="300.84" r="1.5" fill="#dcc8ff" fill-opacity="0.95"/><line x1="702.50" y1="301.89" x2="702.50" y2="307.09" stroke="#d86a98" stroke-width="0.8" stroke-opacity="0.6"/><circle cx="702.50" cy="307.89" r="1.5" fill="#dcc8ff" fill-opacity="0.95"/><line x1="698.30" y1="304.09" x2="698.30" y2="309.29" stroke="#d86a98" stroke-width="0.8" stroke-opacity="0.6"/><circle cx="698.30" cy="310.09" r="1.5" fill="#dcc8ff" fill-opacity="0.95"/><line x1="694.10" y1="305.79" x2="694.10" y2="310.99" stroke="#d86a98" stroke-width="0.8" stroke-opacity="0.6"/><circle cx="694.10" cy="311.79" r="1.5" fill="#dcc8ff" fill-opacity="0.95"/><line x1="720.80" y1="312.17" x2="720.80" y2="317.37" stroke="#d86a98" stroke-width="0.8" stroke-opacity="0.6"/><circle cx="720.80" cy="318.17" r="1.5" fill="#dcc8ff" fill-opacity="0.95"/><line x1="716.60" y1="314.37" x2="716.60" y2="319.57" stroke="#d86a98" stroke-width="0.8" stroke-opacity="0.6"/><circle cx="716.60" cy="320.37" r="1.5" fill="#dcc8ff" fill-opacity="0.95"/><line x1="712.40" y1="316.07" x2="712.40" y2="321.27" stroke="#d86a98" stroke-width="0.8" stroke-opacity="0.6"/><circle cx="712.40" cy="322.07" r="1.5" fill="#dcc8ff" fill-opacity="0.95"/><line x1="371.40" y1="124.40" x2="371.40" y2="129.60" stroke="#d86a98" stroke-width="0.8" stroke-opacity="0.6"/><circle cx="371.40" cy="130.40" r="1.5" fill="#dcc8ff" fill-opacity="0.95"/><line x1="375.40" y1="122.60" x2="375.40" y2="127.80" stroke="#d86a98" stroke-width="0.8" stroke-opacity="0.6"/><circle cx="375.40" cy="128.60" r="1.5" fill="#dcc8ff" fill-opacity="0.95"/><line x1="378.90" y1="121.90" x2="378.90" y2="127.10" stroke="#d86a98" stroke-width="0.8" stroke-opacity="0.6"/><circle cx="378.90" cy="127.90" r="1.5" fill="#dcc8ff" fill-opacity="0.95"/><line x1="383.30" y1="120.80" x2="383.30" y2="126.50" stroke="#e0d8b0" stroke-width="0.8" stroke-opacity="0.6"/><circle cx="383.30" cy="127.30" r="1.5" fill="#f0e8c0" fill-opacity="0.95"/><line x1="740.80" y1="320.80" x2="740.80" y2="325.00" stroke="#d86a98" stroke-width="0.8" stroke-opacity="0.6"/><circle cx="740.80" cy="325.80" r="1.5" fill="#dcc8ff" fill-opacity="0.95"/><line x1="748.30" y1="325.80" x2="748.30" y2="330.00" stroke="#d86a98" stroke-width="0.8" stroke-opacity="0.6"/><circle cx="748.30" cy="330.80" r="1.5" fill="#dcc8ff" fill-opacity="0.95"/><line x1="737.50" y1="325.00" x2="737.50" y2="329.20" stroke="#d86a98" stroke-width="0.8" stroke-opacity="0.6"/><circle cx="737.50" cy="330.00" r="1.5" fill="#dcc8ff" fill-opacity="0.95"/><line x1="732.50" y1="327.50" x2="732.50" y2="331.70" stroke="#d86a98" stroke-width="0.8" stroke-opacity="0.6"/><circle cx="732.50" cy="332.50" r="1.5" fill="#dcc8ff" fill-opacity="0.95"/><line x1="745.00" y1="328.30" x2="745.00" y2="332.50" stroke="#d86a98" stroke-width="0.8" stroke-opacity="0.6"/><circle cx="745.00" cy="333.30" r="1.5" fill="#dcc8ff" fill-opacity="0.95"/><line x1="735.80" y1="332.50" x2="735.80" y2="336.70" stroke="#d86a98" stroke-width="0.8" stroke-opacity="0.6"/><circle cx="735.80" cy="337.50" r="1.5" fill="#dcc8ff" fill-opacity="0.95"/><line x1="740.80" y1="331.70" x2="740.80" y2="335.90" stroke="#d86a98" stroke-width="0.8" stroke-opacity="0.6"/><circle cx="740.80" cy="336.70" r="1.5" fill="#dcc8ff" fill-opacity="0.95"/><circle cx="735.5" cy="372" r="1.3" fill="#e0a040"/><line x1="391" y1="400.3" x2="391.17" y2="390.00" stroke="#18a018" stroke-width="2.3"/><path d="M394.07 390.05 Q393.47 384.54 391.30 382.50 Q389.07 384.46 388.27 389.95 Q391.15 391.20 394.07 390.05 Z" fill="#22c022"/><line x1="391" y1="400.3" x2="382.97" y2="405.01" stroke="#0c0ca8" stroke-width="2.3"/><path d="M381.50 402.51 Q377.11 405.89 376.50 408.80 Q379.34 409.69 384.44 407.51 Q384.01 404.40 381.50 402.51 Z" fill="#1010c8"/><line x1="391" y1="400.3" x2="400.01" y2="405.21" stroke="#b01414" stroke-width="2.3"/><path d="M398.63 407.76 Q403.79 409.77 406.60 408.80 Q405.90 405.91 401.40 402.67 Q398.96 404.64 398.63 407.76 Z" fill="#d01c1c"/><g font-size="4.6" fill="#f4f4f4" font-family="Liberation Sans" font-weight="bold"><text x="389.4" y="380">Y</text><text x="369.5" y="414">Z</text><text x="409" y="414.5">X</text></g><g transform="translate(723,90)"><path d="M0 -10.5 C-4 -8.5 -9.5 -2 -9.7 3.8 L0 -0.3 Z" fill="#13606c" stroke="#a8d6e2" stroke-width="1.15" stroke-linejoin="round"/><path d="M0 -10.5 C4 -8.5 9.5 -2 9.7 3.8 L0 -0.3 Z" fill="#13606c" stroke="#a8d6e2" stroke-width="1.15" stroke-linejoin="round"/><path d="M-10 7 L0 3 L10 7 C9.5 11.5 4.5 14 0 14 C-4.5 14 -9.5 11.5 -10 7 Z" fill="#13606c" stroke="#a8d6e2" stroke-width="1.15" stroke-linejoin="round"/><line x1="0" y1="-11" x2="0" y2="1.5" stroke="#b8e0ea" stroke-width="1.5"/><circle cx="0" cy="-13.5" r="1.6" fill="#d8eef6"/><circle cx="0" cy="7.7" r="2.1" fill="#c42020"/><circle cx="-12" cy="5.5" r="0.9" fill="#8a8a80"/><circle cx="12" cy="5.5" r="0.9" fill="#a09070"/><circle cx="0" cy="-17.5" r="0.6" fill="#8a9aa0"/></g><rect x="754" y="63" width="3" height="371" fill="#8aa0a0" fill-opacity="0.12"/></svg>
</div></body></html>
